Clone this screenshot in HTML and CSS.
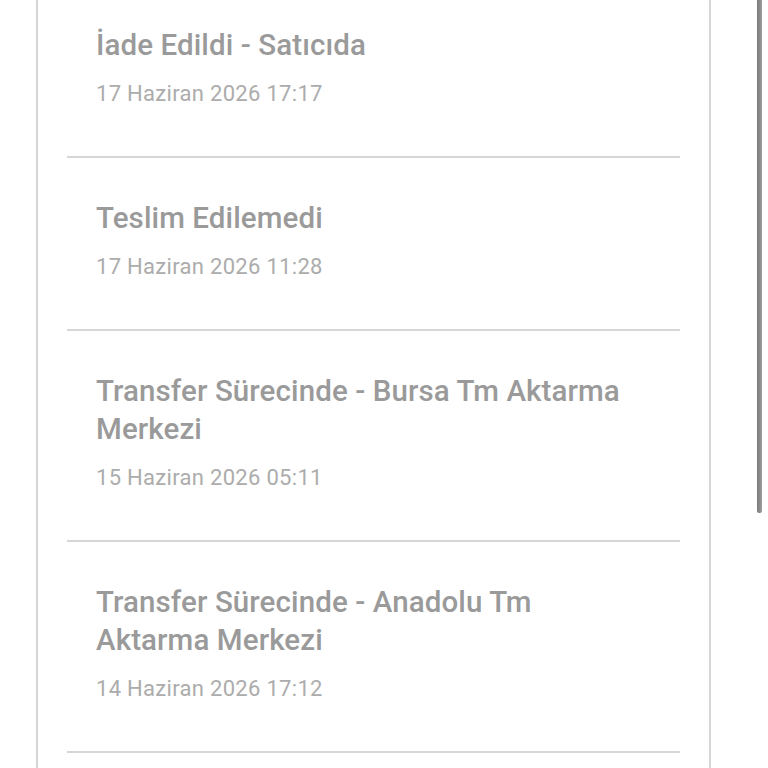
FILE: index.html
```html
<!DOCTYPE html>
<html lang="tr">

<head>
    <meta charset="UTF-8">
    <meta name="viewport" content="width=device-width, initial-scale=1.0">
    <title>Kargo Hareketleri</title>
    <link rel="stylesheet" href="styles.css">
</head>

<body>
    <div class="page">
        <div class="tracking-card">
            <ul class="event-list">
                <li class="event-item">
                    <div class="event-title">İade Edildi - Satıcıda</div>
                    <div class="event-date">17 Haziran 2026 17:17</div>
                </li>
                <li class="event-item">
                    <div class="event-title">Teslim Edilemedi</div>
                    <div class="event-date">17 Haziran 2026 11:28</div>
                </li>
                <li class="event-item">
                    <div class="event-title">Transfer Sürecinde - Bursa Tm Aktarma Merkezi</div>
                    <div class="event-date">15 Haziran 2026 05:11</div>
                </li>
                <li class="event-item">
                    <div class="event-title">Transfer Sürecinde - Anadolu Tm Aktarma Merkezi</div>
                    <div class="event-date">14 Haziran 2026 17:12</div>
                </li>
            </ul>
        </div>
    </div>
    <div class="scroll-thumb"></div>
</body>

</html>
```

FILE: styles.css
```css
* {
    margin: 0;
    padding: 0;
    box-sizing: border-box;
}

html,
body {
    height: 100%;
    overflow: hidden;
    background: #fff;
}

body {
    font-family: Roboto, 'Noto Sans', sans-serif;
}

.page {
    padding: 0 57px 0 36px;
}

.tracking-card {
    width: 675px;
    min-height: 800px;
    margin-top: -15px;
    border-left: 2px solid #d6d6d6;
    border-right: 2px solid #d6d6d6;
    background: #fff;
}

.event-list {
    list-style: none;
    margin: 0 29px;
}

.event-item {
    padding: 41px 29px 48px;
    border-bottom: 2px solid #d6d6d6;
}

.event-title {
    padding-right: 6px;
    font-size: 29.5px;
    font-weight: 500;
    letter-spacing: 0.1px;
    line-height: 38px;
    color: #9a9a9a;
}

.event-date {
    margin-top: 16px;
    font-size: 22px;
    letter-spacing: 0.3px;
    line-height: 28px;
    color: #acacac;
}

.scroll-thumb {
    position: fixed;
    top: 0;
    right: 6px;
    width: 5px;
    height: 513px;
    border-radius: 0 0 2px 2px;
    background: linear-gradient(to right, #7a7a7a, #8e8e8e 60%, #a0a0a0);
}
```
